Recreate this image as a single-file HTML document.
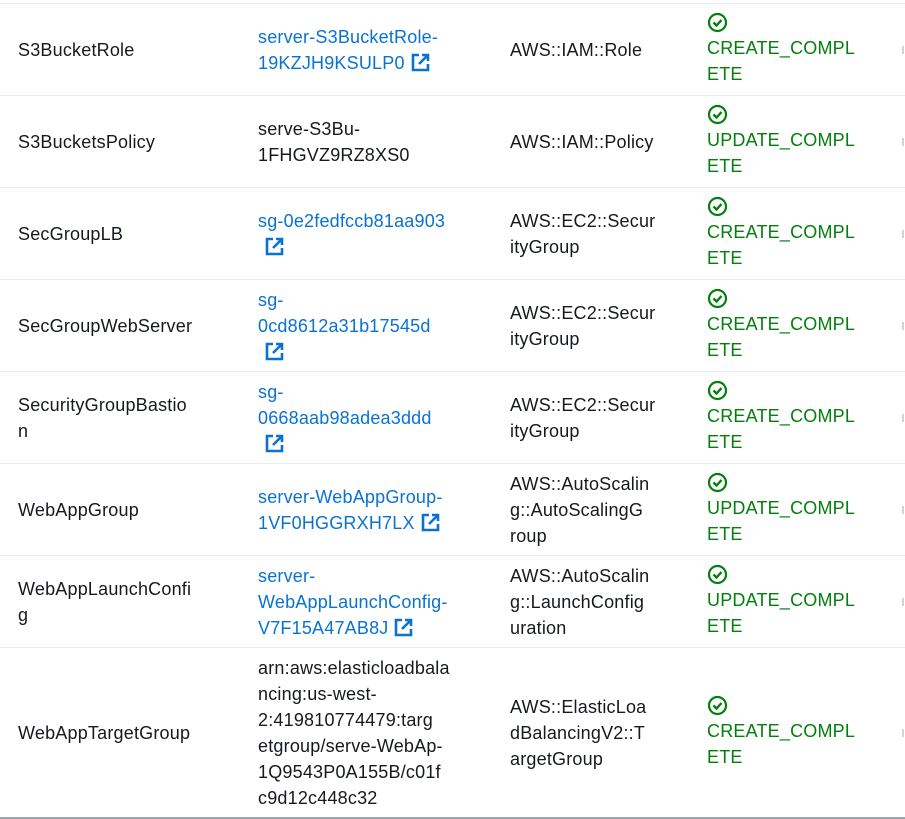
<!DOCTYPE html>
<html><head><meta charset="utf-8"><style>
html,body{margin:0;padding:0;background:#fff;width:905px;height:819px;overflow:hidden}
body{position:relative;font-family:"Liberation Sans",sans-serif;font-size:18px;color:#16191f;letter-spacing:0.2px}
.row{position:absolute;left:0;width:905px;border-top:1px solid #e9ebed}
.c{position:absolute;top:0;bottom:0;display:flex;align-items:center;line-height:26px;white-space:nowrap}
.c1{left:18px}.c2{left:258px}.c3{left:510px}.c4{left:707px;color:#037f0c}
.l{color:#0972d3}
.dash{position:absolute;right:1px;width:2px;height:8px;background:#d1d5db;top:50%;margin-top:-4px}
svg{vertical-align:middle}
.ext{display:inline-block;width:19px;height:19px;vertical-align:-3px;margin-left:6px}
.chk{display:block;width:21px;height:21px;margin-bottom:2px}
</style></head><body>
<svg width="0" height="0" style="position:absolute"><defs>
<symbol id="e" viewBox="0 0 19 19"><path d="M8 2H2v15h15v-6" fill="none" stroke="#0972d3" stroke-width="2.6"/><path d="M11 2h6v6M17 2L8 11" fill="none" stroke="#0972d3" stroke-width="2.6"/></symbol>
<symbol id="k" viewBox="0 0 21 21"><circle cx="10.5" cy="10.5" r="8.5" fill="none" stroke="#037f0c" stroke-width="2.2"/><path d="M6.5 10.5l3 3 5-5.5" fill="none" stroke="#037f0c" stroke-width="2.4"/></symbol>
</defs></svg>

<div class="row" style="top:3px;height:91px">
<div class="c c1">S3BucketRole</div>
<div class="c c2 l"><div>server-S3BucketRole-<br>19KZJH9KSULP0<svg class="ext"><use href="#e"/></svg></div></div>
<div class="c c3">AWS::IAM::Role</div>
<div class="c c4"><div><svg class="chk"><use href="#k"/></svg>CREATE_COMPL<br>ETE</div></div>
<div class="dash"></div></div>

<div class="row" style="top:95px;height:91px">
<div class="c c1">S3BucketsPolicy</div>
<div class="c c2"><div>serve-S3Bu-<br>1FHGVZ9RZ8XS0</div></div>
<div class="c c3">AWS::IAM::Policy</div>
<div class="c c4"><div><svg class="chk"><use href="#k"/></svg>UPDATE_COMPL<br>ETE</div></div>
<div class="dash"></div></div>

<div class="row" style="top:187px;height:91px">
<div class="c c1">SecGroupLB</div>
<div class="c c2 l"><div>sg-0e2fedfccb81aa903<br><svg class="ext" style="margin-left:7px"><use href="#e"/></svg></div></div>
<div class="c c3"><div>AWS::EC2::Secur<br>ityGroup</div></div>
<div class="c c4"><div><svg class="chk"><use href="#k"/></svg>CREATE_COMPL<br>ETE</div></div>
<div class="dash"></div></div>

<div class="row" style="top:279px;height:91px">
<div class="c c1">SecGroupWebServer</div>
<div class="c c2 l"><div>sg-<br>0cd8612a31b17545d<br><svg class="ext" style="margin-left:7px"><use href="#e"/></svg></div></div>
<div class="c c3"><div>AWS::EC2::Secur<br>ityGroup</div></div>
<div class="c c4"><div><svg class="chk"><use href="#k"/></svg>CREATE_COMPL<br>ETE</div></div>
<div class="dash"></div></div>

<div class="row" style="top:371px;height:91px">
<div class="c c1"><div>SecurityGroupBastio<br>n</div></div>
<div class="c c2 l"><div>sg-<br>0668aab98adea3ddd<br><svg class="ext" style="margin-left:7px"><use href="#e"/></svg></div></div>
<div class="c c3"><div>AWS::EC2::Secur<br>ityGroup</div></div>
<div class="c c4"><div><svg class="chk"><use href="#k"/></svg>CREATE_COMPL<br>ETE</div></div>
<div class="dash"></div></div>

<div class="row" style="top:463px;height:91px">
<div class="c c1">WebAppGroup</div>
<div class="c c2 l"><div>server-WebAppGroup-<br>1VF0HGGRXH7LX<svg class="ext"><use href="#e"/></svg></div></div>
<div class="c c3"><div>AWS::AutoScalin<br>g::AutoScalingG<br>roup</div></div>
<div class="c c4"><div><svg class="chk"><use href="#k"/></svg>UPDATE_COMPL<br>ETE</div></div>
<div class="dash"></div></div>

<div class="row" style="top:555px;height:91px">
<div class="c c1"><div>WebAppLaunchConfi<br>g</div></div>
<div class="c c2 l"><div>server-<br>WebAppLaunchConfig-<br>V7F15A47AB8J<svg class="ext"><use href="#e"/></svg></div></div>
<div class="c c3"><div>AWS::AutoScalin<br>g::LaunchConfig<br>uration</div></div>
<div class="c c4"><div><svg class="chk"><use href="#k"/></svg>UPDATE_COMPL<br>ETE</div></div>
<div class="dash"></div></div>

<div class="row" style="top:647px;height:169px;border-bottom:3px solid #9aa6a8">
<div class="c c1">WebAppTargetGroup</div>
<div class="c c2"><div>arn:aws:elasticloadbala<br>ncing:us-west-<br>2:419810774479:targ<br>etgroup/serve-WebAp-<br>1Q9543P0A155B/c01f<br>c9d12c448c32</div></div>
<div class="c c3"><div>AWS::ElasticLoa<br>dBalancingV2::T<br>argetGroup</div></div>
<div class="c c4"><div><svg class="chk"><use href="#k"/></svg>CREATE_COMPL<br>ETE</div></div>
<div class="dash"></div></div>
</body></html>
